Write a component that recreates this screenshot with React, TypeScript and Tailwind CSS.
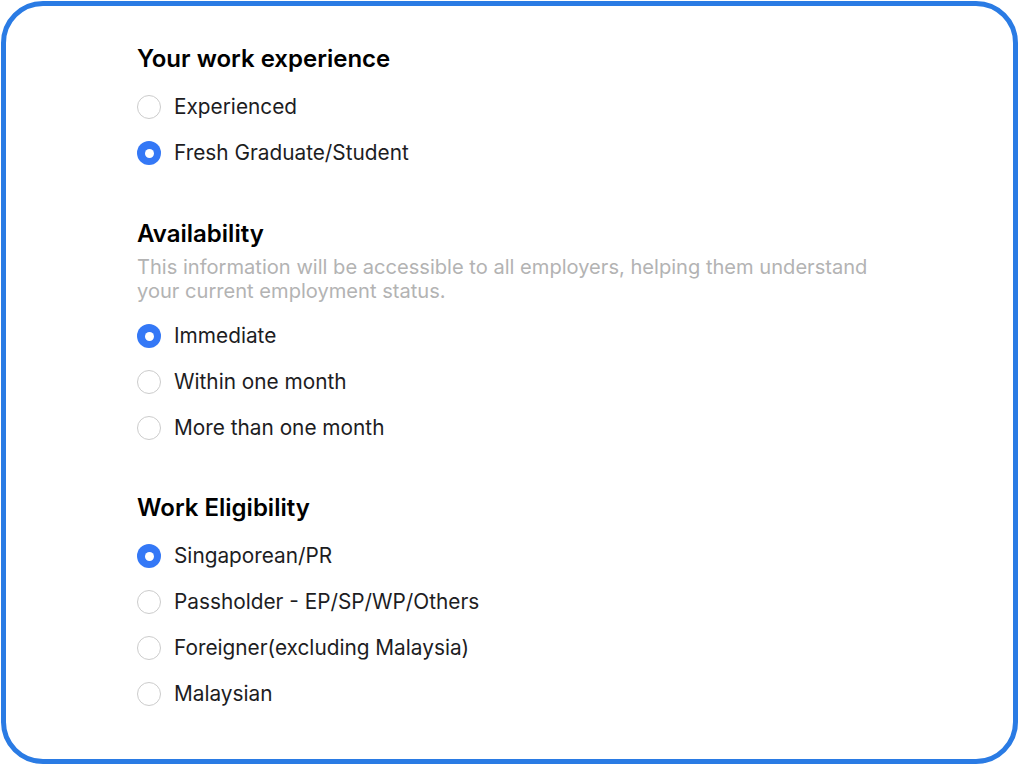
import React from "react";

function Radio({ label, checked }: { label: string; checked?: boolean }) {
  return (
    <div className="flex items-center h-[46px]">
      {checked ? (
        <span className="w-[24px] h-[24px] rounded-full bg-[#3478f6] flex items-center justify-center">
          <span className="w-[9px] h-[9px] rounded-full bg-white" />
        </span>
      ) : (
        <span className="w-[24px] h-[24px] rounded-full border border-[#cccccc] bg-white" />
      )}
      <span className="ml-[13px] text-[20.8px] text-[#1d1d1f]">{label}</span>
    </div>
  );
}

export default function App() {
  return (
    <div className="w-[1020px] h-[765px] bg-white p-[1px]" style={{ fontFamily: "Inter, 'Noto Sans', sans-serif" }}>
      <div className="w-[1017px] h-[763px] rounded-[42px] border-[5px] border-[#2a7be4] pl-[131px] pt-[35px]">
        <h2 className="text-[24px] font-semibold text-black leading-[36px]">Your work experience</h2>
        <div className="mt-[7px]">
          <Radio label="Experienced" />
          <Radio label="Fresh Graduate/Student" checked />
        </div>
        <h2 className="mt-[40px] text-[24px] font-semibold text-black leading-[36px]">Availability</h2>
        <p className="mt-[3px] text-[20.1px] text-[#b3b3b3] leading-[24px] w-[760px]">
          This information will be accessible to all employers, helping them understand your current employment status.
        </p>
        <div className="mt-[10px]">
          <Radio label="Immediate" checked />
          <Radio label="Within one month" />
          <Radio label="More than one month" />
        </div>
        <h2 className="mt-[39px] text-[24px] font-semibold text-black leading-[36px]">Work Eligibility</h2>
        <div className="mt-[7px]">
          <Radio label="Singaporean/PR" checked />
          <Radio label="Passholder - EP/SP/WP/Others" />
          <Radio label="Foreigner(excluding Malaysia)" />
          <Radio label="Malaysian" />
        </div>
      </div>
    </div>
  );
}
